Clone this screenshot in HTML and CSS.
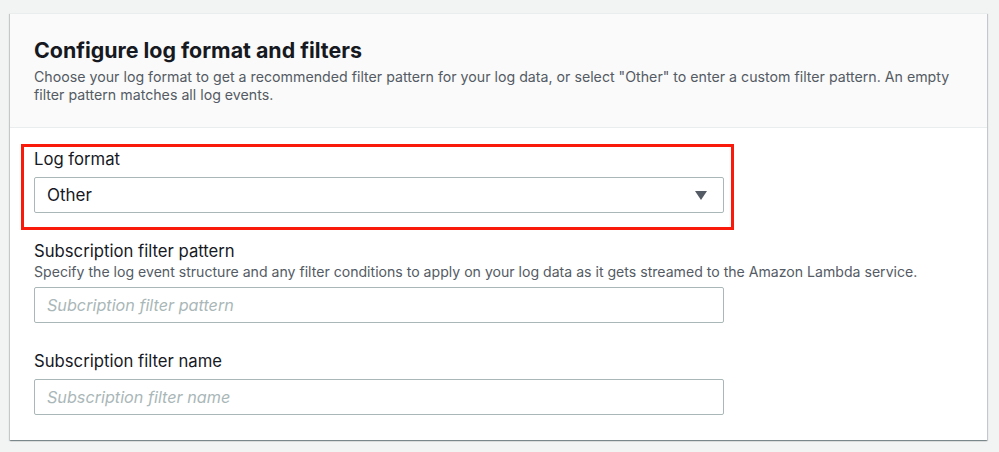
FILE: index.html
```html
<!DOCTYPE html>
<html>
<head>
<meta charset="utf-8">
<title>Configure log format and filters</title>
<link rel="stylesheet" href="styles.css">
</head>
<body>
<div class="page">
  <section class="card">
    <header class="card-header">
      <h2 class="card-title">Configure log format and filters</h2>
      <p class="card-desc">Choose your log format to get a recommended filter pattern for your log data, or select "Other" to enter a custom filter pattern. An empty filter pattern matches all log events.</p>
    </header>
    <div class="card-body">
      <div class="field field-highlight">
        <label class="field-label">Log format</label>
        <div class="select">
          <span class="select-value">Other</span>
          <svg class="select-caret" width="12" height="9" viewBox="0 0 12 9"><polygon points="0,0 12,0 6,9" fill="#545b64"/></svg>
        </div>
      </div>
      <div class="field">
        <label class="field-label has-desc">Subscription filter pattern</label>
        <div class="field-desc">Specify the log event structure and any filter conditions to apply on your log data as it gets streamed to the Amazon Lambda service.</div>
        <div class="input"><span class="placeholder">Subcription filter pattern</span></div>
      </div>
      <div class="field">
        <label class="field-label">Subscription filter name</label>
        <div class="input"><span class="placeholder">Subscription filter name</span></div>
      </div>
    </div>
  </section>
</div>
</body>
</html>
```
FILE: styles.css
```css
html, body {
  margin: 0;
  padding: 0;
  background: #f2f3f3;
}
body {
  font-family: Inter, "Noto Sans", sans-serif;
  color: #16191f;
}
.page {
  padding: 13px 12px 12px 10px;
}
.card {
  background: #ffffff;
  box-shadow: 0 1px 1px 0 rgba(0, 28, 36, 0.3), 1px 1px 1px 0 rgba(0, 28, 36, 0.15), -1px 1px 1px 0 rgba(0, 28, 36, 0.15);
  border-top: 1px solid #eaeded;
}
.card-header {
  background: #fafafa;
  border-bottom: 1px solid #eaeded;
  padding: 24px 24px 22px 24px;
}
.card-title {
  margin: 0;
  font-size: 21.4px;
  line-height: 25px;
  font-weight: 700;
  color: #16191f;
}
.card-desc {
  margin: 5px 0 0 0;
  font-size: 14.2px;
  line-height: 18.4px;
  color: #545b64;
}
.card-body {
  padding: 20px 24px 25px 24px;
  display: flex;
  flex-direction: column;
  gap: 26.5px;
}
.field {
  display: flex;
  flex-direction: column;
  width: 690px;
}
.field-highlight {
  position: relative;
}
.field-highlight::after {
  content: "";
  position: absolute;
  top: -4px;
  left: -13px;
  right: -10px;
  bottom: -17px;
  border: 3px solid #fa1a0c;
  pointer-events: none;
}
.field-label {
  font-size: 16.7px;
  line-height: 22px;
  color: #16191f;
  margin-bottom: 7.5px;
}
.field-label.has-desc {
  margin-bottom: 1px;
}
.field-desc {
  font-size: 14.1px;
  line-height: 18.4px;
  color: #545b64;
  margin-bottom: 6px;
  white-space: nowrap;
}
.select, .input {
  box-sizing: border-box;
  height: 36px;
  border: 1px solid #aab7b8;
  border-radius: 2px;
  background: #ffffff;
  display: flex;
  align-items: center;
  padding: 0 16px 0 12px;
  font-size: 16.2px;
  line-height: 20px;
}
.select {
  justify-content: space-between;
}
.select-value {
  color: #16191f;
  font-size: 17px;
}
.select-caret {
  display: block;
  margin-top: 1px;
}
.placeholder {
  color: #aab7b8;
  font-style: italic;
}
```
